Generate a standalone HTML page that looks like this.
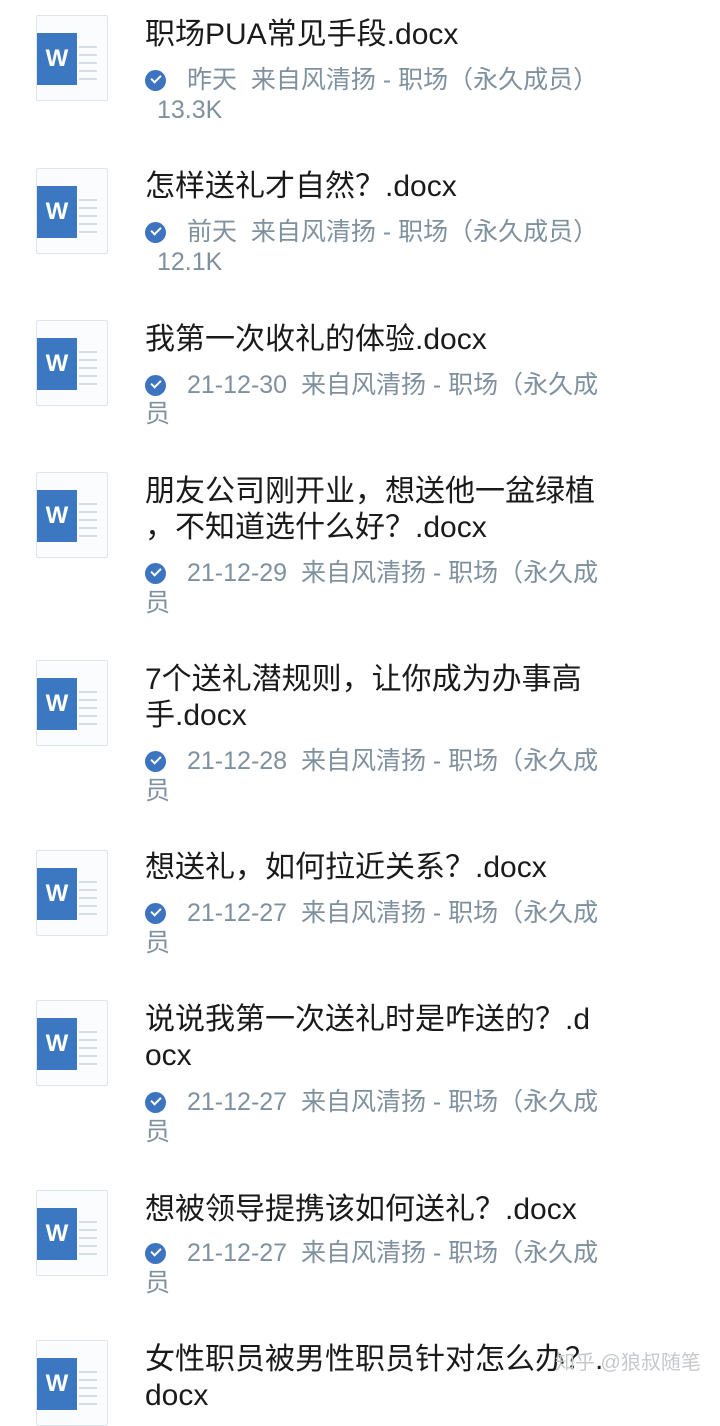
<!DOCTYPE html>
<html><head><meta charset="utf-8"><style>
body{margin:0;width:720px;height:1390px;background:#fff;position:relative;overflow:hidden;font-family:"Liberation Sans","Noto Sans CJK SC",sans-serif}
.ic{position:absolute;left:36px;width:70px;height:84px;border:1px solid #dfe5ea;border-radius:2px;background:#fbfcfd}
.ic .w{position:absolute;left:0;top:17px;width:40px;height:52px;background:#3c78c1;color:#fff;font:bold 24px "Liberation Sans",sans-serif;text-align:center;line-height:52px}
.ic .l{position:absolute;left:42px;width:18px;height:2px;background:#d6dde5}
.t{position:absolute;left:145px;font-size:30px;color:#1a1a1a;white-space:nowrap;line-height:36px}
.m{position:absolute;left:145px;font-size:25px;color:#7f909e;white-space:nowrap;line-height:30px}
.m .c{display:inline-block;width:21px;height:21px;border-radius:50%;background:#3d74c0;vertical-align:-3px;margin-right:21px;position:relative}
.m .c:after{content:"";position:absolute;left:6px;top:5px;width:8px;height:4px;border-left:2px solid #fff;border-bottom:2px solid #fff;transform:rotate(-45deg)}
.wm{position:absolute;left:555px;top:1346px;font-size:20px;color:#c5c9cc}
</style></head><body>

<div class="ic" style="top:15px"><div class="w">W</div><div class="l" style="top:30px"></div><div class="l" style="top:38px"></div><div class="l" style="top:46px"></div><div class="l" style="top:54px"></div><div class="l" style="top:62px"></div></div>
<div class="t" style="top:17px">职场PUA常见手段.docx</div>
<div class="m" style="top:65px"><span class="c"></span>昨天&nbsp; 来自风清扬 - 职场（永久成员）</div>
<div class="m" style="top:95px;left:157px">13.3K</div>

<div class="ic" style="top:168px"><div class="w">W</div><div class="l" style="top:30px"></div><div class="l" style="top:38px"></div><div class="l" style="top:46px"></div><div class="l" style="top:54px"></div><div class="l" style="top:62px"></div></div>
<div class="t" style="top:169px">怎样送礼才自然？.docx</div>
<div class="m" style="top:217px"><span class="c"></span>前天&nbsp; 来自风清扬 - 职场（永久成员）</div>
<div class="m" style="top:247px;left:157px">12.1K</div>

<div class="ic" style="top:320px"><div class="w">W</div><div class="l" style="top:30px"></div><div class="l" style="top:38px"></div><div class="l" style="top:46px"></div><div class="l" style="top:54px"></div><div class="l" style="top:62px"></div></div>
<div class="t" style="top:322px">我第一次收礼的体验.docx</div>
<div class="m" style="top:370px"><span class="c"></span>21-12-30&nbsp; 来自风清扬 - 职场（永久成</div>
<div class="m" style="top:399px">员</div>

<div class="ic" style="top:472px"><div class="w">W</div><div class="l" style="top:30px"></div><div class="l" style="top:38px"></div><div class="l" style="top:46px"></div><div class="l" style="top:54px"></div><div class="l" style="top:62px"></div></div>
<div class="t" style="top:474px">朋友公司刚开业，想送他一盆绿植</div>
<div class="t" style="top:510px">，不知道选什么好？.docx</div>
<div class="m" style="top:558px"><span class="c"></span>21-12-29&nbsp; 来自风清扬 - 职场（永久成</div>
<div class="m" style="top:588px">员</div>

<div class="ic" style="top:660px"><div class="w">W</div><div class="l" style="top:30px"></div><div class="l" style="top:38px"></div><div class="l" style="top:46px"></div><div class="l" style="top:54px"></div><div class="l" style="top:62px"></div></div>
<div class="t" style="top:662px">7个送礼潜规则，让你成为办事高</div>
<div class="t" style="top:698px">手.docx</div>
<div class="m" style="top:746px"><span class="c"></span>21-12-28&nbsp; 来自风清扬 - 职场（永久成</div>
<div class="m" style="top:776px">员</div>

<div class="ic" style="top:850px"><div class="w">W</div><div class="l" style="top:30px"></div><div class="l" style="top:38px"></div><div class="l" style="top:46px"></div><div class="l" style="top:54px"></div><div class="l" style="top:62px"></div></div>
<div class="t" style="top:850px">想送礼，如何拉近关系？.docx</div>
<div class="m" style="top:898px"><span class="c"></span>21-12-27&nbsp; 来自风清扬 - 职场（永久成</div>
<div class="m" style="top:928px">员</div>

<div class="ic" style="top:1000px"><div class="w">W</div><div class="l" style="top:30px"></div><div class="l" style="top:38px"></div><div class="l" style="top:46px"></div><div class="l" style="top:54px"></div><div class="l" style="top:62px"></div></div>
<div class="t" style="top:1002px">说说我第一次送礼时是咋送的？.d</div>
<div class="t" style="top:1038px">ocx</div>
<div class="m" style="top:1087px"><span class="c"></span>21-12-27&nbsp; 来自风清扬 - 职场（永久成</div>
<div class="m" style="top:1117px">员</div>

<div class="ic" style="top:1190px"><div class="w">W</div><div class="l" style="top:30px"></div><div class="l" style="top:38px"></div><div class="l" style="top:46px"></div><div class="l" style="top:54px"></div><div class="l" style="top:62px"></div></div>
<div class="t" style="top:1192px">想被领导提携该如何送礼？.docx</div>
<div class="m" style="top:1238px"><span class="c"></span>21-12-27&nbsp; 来自风清扬 - 职场（永久成</div>
<div class="m" style="top:1268px">员</div>

<div class="ic" style="top:1340px"><div class="w">W</div><div class="l" style="top:30px"></div><div class="l" style="top:38px"></div><div class="l" style="top:46px"></div><div class="l" style="top:54px"></div><div class="l" style="top:62px"></div></div>
<div class="t" style="top:1342px">女性职员被男性职员针对怎么办？.</div>
<div class="t" style="top:1378px">docx</div>
<div class="wm">知乎 @狼叔随笔</div>
</body></html>
